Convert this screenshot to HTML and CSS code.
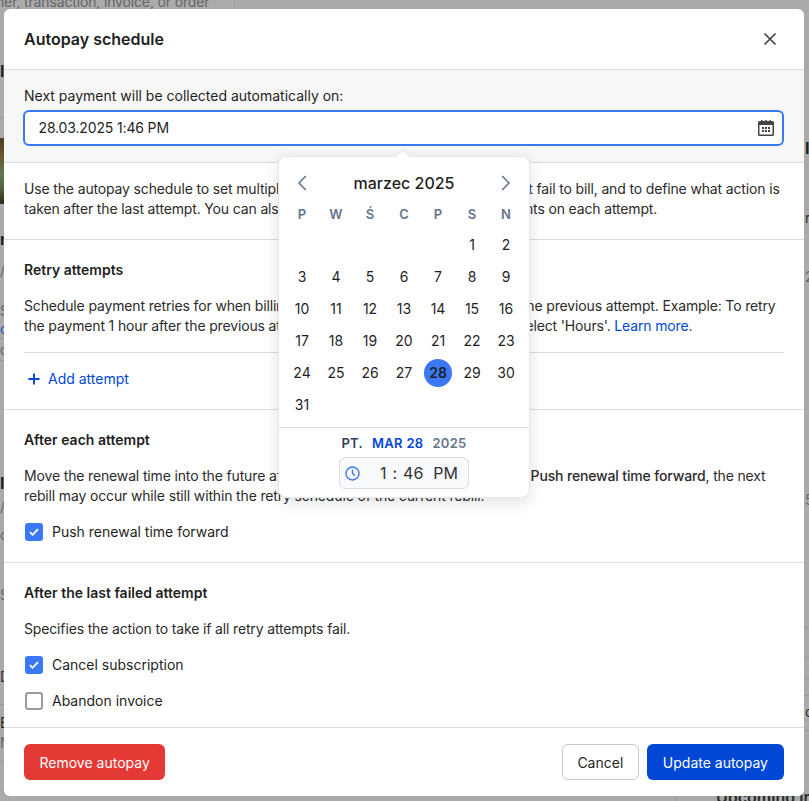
FILE: index.html
```html
<!DOCTYPE html>
<html lang="en">
<head>
    <meta charset="UTF-8">
    <meta name="viewport" content="width=device-width, initial-scale=1.0">
    <title>Autopay schedule</title>
    <link rel="stylesheet" href="styles.css">
</head>
<body>
    <!-- Page behind the dialog, only the edges show -->
    <div class="backdrop">
        <div class="bg-search">mer, transaction, invoice, or order</div>
        <div class="bg-thumb"></div>
        <span class="frag frag-bold l1">I</span>
        <span class="frag frag-bold l2">n</span>
        <span class="frag l3">/</span>
        <span class="frag l4">S</span>
        <span class="frag frag-link l5">o</span>
        <span class="frag l6">d</span>
        <span class="frag frag-bold l7">I</span>
        <span class="frag l8">/</span>
        <span class="frag l9">c</span>
        <span class="frag l10">S</span>
        <span class="frag frag-dark l11">D</span>
        <span class="frag frag-dark l12">E</span>
        <span class="frag l13">N</span>
        <span class="frag frag-bold r1">I</span>
        <span class="frag frag-dark r2">r</span>
        <span class="frag r3">2</span>
        <span class="frag r4">5</span>
        <span class="frag frag-dark r5">c</span>
        <div class="bg-line ll1"></div>
        <div class="bg-line ll2"></div>
        <div class="bg-line ll3"></div>
        <div class="bg-line ll4"></div>
        <div class="bg-line ll5"></div>
        <div class="bg-line rl1"></div>
        <div class="bg-line rl2"></div>
        <div class="bg-line rl3"></div>
        <div class="bg-line rl4"></div>
        <div class="bg-line rl5"></div>
        <div class="bg-line rl6"></div>
        <div class="bg-divider"></div>
        <div class="bg-upcoming">Upcoming in</div>
    </div>

    <div class="modal">
        <header class="modal-header">
            <h1>Autopay schedule</h1>
            <svg class="close-icon" width="14" height="14" viewBox="0 0 14 14">
                <path d="M1.500 1.500l11 11M12.500 1.500l-11 11" fill="none" stroke="#444" stroke-width="1.700"/>
            </svg>
        </header>

        <section class="section next-payment">
            <label class="next-label">Next payment will be collected automatically on:</label>
            <div class="date-input">
                <span>28.03.2025 1:46 PM</span>
                <svg width="16" height="16" viewBox="0 0 16 16">
                    <path d="M1.500 1H3V0h1.500v1h2.700V0h1.600v1h2.700V0H13v1h1.500A1.500 1.500 0 0 1 16 2.500v12a1.500 1.500 0 0 1-1.500 1.500h-13A1.500 1.500 0 0 1 0 14.500v-12A1.500 1.500 0 0 1 1.500 1zM1.500 5v9.500h13V5z" fill="#444" fill-rule="evenodd"/>
                    <path d="M4 7h2v2H4zM7 7h2v2H7zM10 7h2v2h-2zM4 10h2v2H4zM7 10h2v2H7zM10 10h2v2h-2z" fill="#444"/>
                </svg>
            </div>
        </section>

        <section class="section intro">
            <p>Use the autopay schedule to set multiple payment attempts for all invoices that fail to bill, and to define what action is<br>taken after the last attempt. You can also notify your customers of charge events on each attempt.</p>
        </section>

        <section class="section retry">
            <h2>Retry attempts</h2>
            <p>Schedule payment retries for when billing fails. Every retry is measured from the previous attempt. Example: To retry<br>the payment 1 hour after the previous attempt, enter 1 in the field value, then select 'Hours'. <a href="#">Learn more</a>.</p>
            <div class="add-row">
                <svg width="12" height="12" viewBox="0 0 12 12">
                    <path d="M6 .5v11M.5 6h11" fill="none" stroke="#0047d6" stroke-width="1.900"/>
                </svg>
                <span>Add attempt</span>
            </div>
        </section>

        <section class="section">
            <h2>After each attempt</h2>
            <p>Move the renewal time into the future after each attempt. If you did not enable <b>Push renewal time forward</b>, the next<br>rebill may occur while still within the retry schedule of the current rebill.</p>
            <div class="check-row">
                <span class="check on"><svg width="10" height="8" viewBox="0 0 10 8"><path d="M1 4.200l2.600 2.600L9 1.200" fill="none" stroke="#fff" stroke-width="1.800"/></svg></span>
                Push renewal time forward
            </div>
        </section>

        <section class="section last-attempt">
            <h2>After the last failed attempt</h2>
            <p>Specifies the action to take if all retry attempts fail.</p>
            <div class="check-row">
                <span class="check on"><svg width="10" height="8" viewBox="0 0 10 8"><path d="M1 4.200l2.600 2.600L9 1.200" fill="none" stroke="#fff" stroke-width="1.800"/></svg></span>
                Cancel subscription
            </div>
            <div class="check-row">
                <span class="check"></span>
                Abandon invoice
            </div>
        </section>

        <footer class="modal-footer">
            <button class="btn btn-danger">Remove autopay</button>
            <div class="footer-right">
                <button class="btn btn-plain">Cancel</button>
                <button class="btn btn-primary">Update autopay</button>
            </div>
        </footer>
    </div>

    <!-- Date picker popover -->
    <div class="picker">
        <div class="picker-arrow"></div>
        <div class="picker-month">
            <svg width="10" height="16" viewBox="0 0 10 16"><path d="M8.800 1L2 8l6.800 7" fill="none" stroke="#64748b" stroke-width="1.600"/></svg>
            <span>marzec 2025</span>
            <svg width="10" height="16" viewBox="0 0 10 16"><path d="M1.200 1L8 8l-6.800 7" fill="none" stroke="#64748b" stroke-width="1.600"/></svg>
        </div>
        <div class="days">
            <span class="dow">P</span><span class="dow">W</span><span class="dow">Ś</span><span class="dow">C</span><span class="dow">P</span><span class="dow">S</span><span class="dow">N</span>
            <span></span><span></span><span></span><span></span><span></span><span>1</span><span>2</span>
            <span>3</span><span>4</span><span>5</span><span>6</span><span>7</span><span>8</span><span>9</span>
            <span>10</span><span>11</span><span>12</span><span>13</span><span>14</span><span>15</span><span>16</span>
            <span>17</span><span>18</span><span>19</span><span>20</span><span>21</span><span>22</span><span>23</span>
            <span>24</span><span>25</span><span>26</span><span>27</span><span><b class="selected">28</b></span><span>29</span><span>30</span>
            <span>31</span>
        </div>
        <div class="picker-bottom">
            <div class="picked-date">
                <span class="pd-day">PT.</span><span class="pd-month">MAR 28</span><span class="pd-year">2025</span>
            </div>
            <div class="time-box">
                <svg width="15" height="15" viewBox="0 0 15 15">
                    <circle cx="7.500" cy="7.500" r="6.500" fill="none" stroke="#3b78f5" stroke-width="1.400"/>
                    <path d="M7.500 3.500v4l2.500 2.300" fill="none" stroke="#3b78f5" stroke-width="1.400"/>
                </svg>
                <span class="time-text"><span>1</span><i>:</i><span>46</span><span class="ampm">PM</span></span>
            </div>
        </div>
    </div>
</body>
</html>
```

FILE: styles.css
```css
* {
    box-sizing: border-box;
}
body {
    font-family: Inter, "Liberation Sans", sans-serif;
    font-size: 14px;
    line-height: 20px;
    margin: 0;
    height: 801px;
    overflow: hidden;
    background: #aaaaaa;
    color: #1f1f1f;
}
p, h1, h2 {
    margin: 0;
}

/* backdrop scraps */
.backdrop {
    position: absolute;
    inset: 0;
    overflow: hidden;
    color: #666;
}
.bg-search {
    position: absolute;
    left: 0;
    top: -8px;
    width: 235px;
    height: 17px;
    text-indent: -8px;
    letter-spacing: -0.15px;
    background: #ababab;
    border-right: 1px solid #a2a2a2;
    color: #666;
    white-space: nowrap;
}
.bg-thumb {
    position: absolute;
    left: 0;
    top: 138px;
    width: 4px;
    height: 66px;
    background: linear-gradient(#4f3c22 0%, #6b5a30 30%, #5f7a52 55%, #54633f 75%, #33281a 100%);
}
.frag {
    position: absolute;
    left: 0;
    line-height: 16px;
}
.frag-bold {
    font-size: 16px;
    font-weight: 700;
    color: #222;
}
.frag-dark {
    color: #2a2a2a;
}
.frag-link {
    color: #1a4fc0;
}
.l1 { top: 63px; }
.l2 { top: 231px; }
.l3 { top: 263px; }
.l4 { top: 303px; }
.l5 { top: 321px; }
.l6 { top: 342px; }
.l7 { top: 475px; }
.l8 { top: 499px; }
.l9 { top: 527px; }
.l10 { top: 587px; }
.l11 { top: 669px; }
.l12 { top: 715px; }
.l13 { top: 735px; }
.r1 { top: 140px; left: 805px; }
.r2 { top: 210px; left: 805px; }
.r3 { top: 269px; left: 805px; }
.r4 { top: 492px; left: 805px; }
.r5 { top: 704px; left: 805px; }
.bg-line {
    position: absolute;
    height: 1px;
    width: 5px;
    left: 0;
    background: #9a9a9a;
}
.ll1 { top: 117px; }
.ll2 { top: 338px; }
.ll3 { top: 360px; }
.ll4 { top: 704px; }
.ll5 { top: 761px; }
.rl1, .rl2, .rl3, .rl4, .rl5, .rl6 {
    left: 804px;
}
.rl1 { top: 209px; }
.rl2 { top: 627px; }
.rl3 { top: 657px; }
.rl4 { top: 678px; }
.rl5 { top: 695px; }
.rl6 { top: 730px; }
.bg-divider {
    position: absolute;
    left: 675px;
    top: 790px;
    width: 1px;
    height: 11px;
    background: #9a9a9a;
}
.bg-upcoming {
    position: absolute;
    left: 716px;
    top: 787px;
    font-size: 16px;
    font-weight: 600;
    white-space: nowrap;
    color: #2a2a2a;
}

/* dialog */
.modal {
    position: absolute;
    left: 4px;
    top: 9px;
    width: 800px;
    height: 787px;
    background: #fff;
    border-radius: 6px;
    display: flex;
    flex-direction: column;
    overflow: hidden;
}
.modal-header {
    flex: none;
    height: 61px;
    padding: 0 20px;
    display: flex;
    align-items: center;
    justify-content: space-between;
    border-bottom: 1px solid #dcdcdc;
}
.modal-header h1 {
    font-size: 16px;
    font-weight: 600;
}
.close-icon {
    margin-right: 7px;
}
.section {
    flex: none;
    padding: 20px;
    border-bottom: 1px solid #dcdcdc;
}
.section h2 {
    font-size: 14px;
    font-weight: 600;
    margin-bottom: 16px;
}
.section p {
    color: #2b2b2b;
    letter-spacing: -0.15px;
    white-space: nowrap;
}
.section b {
    font-weight: 500;
}
.section a {
    color: #0047d6;
    text-decoration: none;
}
.next-payment {
    background: #f7f7f7;
    height: 93px;
    padding: 16px 20px 0;
}
.next-label {
    display: block;
    margin-bottom: 4px;
}
.date-input {
    height: 36px;
    margin-left: -1px;
    padding: 0 8px 0 13.500px;
    background: #fff;
    border: 2px solid #3b78f5;
    border-radius: 6px;
    display: flex;
    align-items: center;
    justify-content: space-between;
    letter-spacing: -0.15px;
}
.intro {
    height: 77px;
    padding-top: 16px;
}
.retry {
    height: 170px;
}
.retry .add-row {
    margin-top: 16px;
    padding-top: 16px;
    padding-left: 4px;
    border-top: 1px solid #dcdcdc;
    display: flex;
    align-items: center;
    gap: 8px;
    color: #0047d6;
}
.check-row {
    display: flex;
    align-items: center;
    gap: 9px;
    margin-top: 16px;
    height: 20px;
}
.check {
    flex: none;
    width: 18px;
    height: 18px;
    margin-left: 1px;
    border: 2px solid #9a9a9a;
    border-radius: 3px;
    background: #fff;
    display: flex;
    align-items: center;
    justify-content: center;
}
.check.on {
    background: #3b78f5;
    border-color: #3b78f5;
}
.last-attempt {
    flex: 1;
    padding-bottom: 16px;
}
.modal-footer {
    flex: none;
    height: 68px;
    padding: 16px 20px;
    display: flex;
    justify-content: space-between;
}
.footer-right {
    display: flex;
    gap: 8px;
}
.btn {
    font-family: inherit;
    font-size: 14px;
    font-weight: 400;
    height: 36px;
    padding: 0 16px;
    border-radius: 6px;
    border: none;
    color: #fff;
}
.btn-danger {
    background: #e53935;
    padding: 0 15.500px;
}
.btn-plain {
    background: #fff;
    border: 1px solid #c8c8c8;
    color: #1f1f1f;
    padding: 0 14.500px;
}
.btn-primary {
    background: #0047d6;
}

/* date picker */
.picker {
    position: absolute;
    left: 278px;
    top: 156px;
    width: 252px;
    height: 342px;
    background: #fff;
    border: 1px solid #e2e8f0;
    border-radius: 8px;
    box-shadow: 0 4px 16px rgba(0, 0, 0, 0.12);
}
.picker-arrow {
    position: absolute;
    left: 119px;
    top: -6px;
    width: 10px;
    height: 10px;
    background: #fff;
    border-left: 1px solid #e2e8f0;
    border-top: 1px solid #e2e8f0;
    transform: rotate(45deg);
}
.picker-month {
    height: 35px;
    margin-top: 8px;
    padding: 0 18px;
    display: flex;
    align-items: center;
    justify-content: space-between;
    font-size: 16px;
    font-weight: 500;
}
.days {
    display: grid;
    grid-template-columns: repeat(7, 34px);
    grid-template-rows: 29px;
    grid-auto-rows: 32px;
    padding: 0 6px;
    text-align: center;
}
.days span {
    display: flex;
    align-items: center;
    justify-content: center;
}
.days .dow {
    font-size: 13px;
    font-weight: 600;
    color: #64748b;
    height: 28px;
}
.selected {
    width: 28px;
    height: 28px;
    border-radius: 50%;
    background: #3b78f5;
    display: flex;
    align-items: center;
    justify-content: center;
    font-weight: 600;
}
.picker-bottom {
    position: absolute;
    left: 0;
    right: 0;
    top: 270px;
    border-top: 1px solid #dcdcdc;
    padding-top: 5px;
    display: flex;
    flex-direction: column;
    align-items: center;
}
.picked-date {
    display: flex;
    gap: 9px;
    font-size: 13px;
    font-weight: 600;
    letter-spacing: 0.3px;
}
.pd-day {
    color: #334155;
}
.pd-month {
    color: #0047d6;
}
.pd-year {
    color: #64748b;
}
.time-box {
    margin-top: 4px;
    width: 130px;
    height: 32px;
    padding: 0 10px 0 5px;
    background: #f8f9fa;
    border: 1px solid #d9dce0;
    border-radius: 6px;
    display: flex;
    align-items: center;
    justify-content: space-between;
}
.time-text {
    display: flex;
    gap: 6px;
    font-size: 16px;
    color: #333;
}
.time-text i {
    font-style: normal;
}
.ampm {
    margin-left: 4px;
}
```
